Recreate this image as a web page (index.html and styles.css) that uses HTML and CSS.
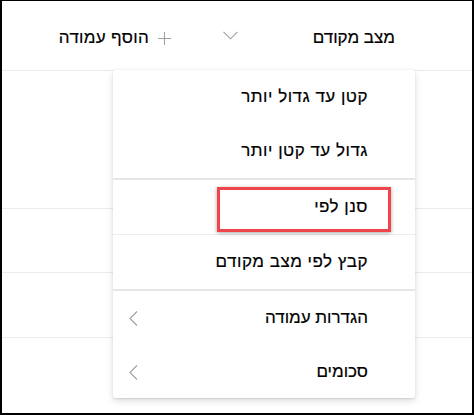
FILE: index.html
```html
<!DOCTYPE html>
<html lang="he" dir="rtl">
<head>
<meta charset="utf-8">
<link rel="stylesheet" href="styles.css">
</head>
<body>
<div class="frame">
  <div class="header">
    <div class="col-head">
      <span class="col-title">מצב מקודם</span>
      <svg class="chev-down" width="15" height="9" viewBox="0 0 15 9"><path d="M0.5 0.8 L7.5 7.8 L14.5 0.8" fill="none" stroke="#a19f9d" stroke-width="1.1"/></svg>
    </div>
    <div class="add-col">
      <svg class="plus" width="13" height="13" viewBox="0 0 13 13"><path d="M6.5 0 V13 M0 6.5 H13" stroke="#a19f9d" stroke-width="1.1"/></svg>
      <span class="add-label">הוסף עמודה</span>
    </div>
  </div>
  <div class="row r1"></div>
  <div class="row r2"></div>
  <div class="row r3"></div>
  <div class="row r4"></div>

  <div class="menu">
    <div class="section">
      <div class="item">קטן עד גדול יותר</div>
      <div class="item">גדול עד קטן יותר</div>
    </div>
    <div class="section">
      <div class="item sep">סנן לפי</div>
      <div class="item">קבץ לפי מצב מקודם</div>
    </div>
    <div class="section">
      <div class="item sub">הגדרות עמודה
        <svg class="chev-left" width="9" height="15" viewBox="0 0 9 15"><path d="M8 0.5 L1 7.5 L8 14.5" fill="none" stroke="#a19f9d" stroke-width="1.1"/></svg>
      </div>
      <div class="item sub">סכומים
        <svg class="chev-left" width="9" height="15" viewBox="0 0 9 15"><path d="M8 0.5 L1 7.5 L8 14.5" fill="none" stroke="#a19f9d" stroke-width="1.1"/></svg>
      </div>
    </div>
  </div>
  <div class="highlight"></div>
</div>
</body>
</html>
```
FILE: styles.css
```css
* { box-sizing: border-box; }
html, body { margin: 0; padding: 0; background: #fff; }
body {
  font-family: "Liberation Sans", Arial, sans-serif;
  color: #000;
}
.frame {
  position: relative;
  width: 474px;
  height: 415px;
  border: 2px solid #000;
  border-top-width: 1px;
  overflow: hidden;
  background: #fff;
}
.header {
  height: 70px;
  border-bottom: 1px solid #edebe9;
  display: flex;
  align-items: center;
  padding-right: 77px;
  padding-top: 4px;
  font-size: 17px;
  -webkit-text-stroke: 0.2px #000;
}
.col-head {
  width: 172px;
  display: flex;
  align-items: center;
  justify-content: space-between;
}
.chev-down { margin-top: -5px; }
.add-col {
  display: flex;
  align-items: center;
  gap: 9px;
  margin-right: 52px;
}
.add-label { letter-spacing: 0.3px; }
.plus { margin-top: 1px; }
.row { border-bottom: 1px solid #edebe9; }
.r1 { height: 138px; }
.r2 { height: 64px; }
.r3 { height: 65px; }
.r4 { border-bottom: none; }
.menu {
  position: absolute;
  left: 111px;
  top: 69px;
  width: 302px;
  height: 328px;
  background: #fff;
  border-radius: 2px;
  box-shadow: 0 3px 7px rgba(0,0,0,0.13), 0 0.5px 2px rgba(0,0,0,0.10);
  display: flex;
  flex-direction: column;
}
.section { border-bottom: 2px solid #e6e6e6; }
.section:last-child { border-bottom: none; }
.item {
  height: 54px;
  display: flex;
  align-items: center;
  padding-right: 47px;
  padding-left: 16px;
  font-size: 17px;
  letter-spacing: 0.5px;
  -webkit-text-stroke: 0.2px #000;
}
.item.sep { height: 55px; border-bottom: 1px solid #ededed; }
.sub { justify-content: space-between; letter-spacing: 0; }
.highlight {
  position: absolute;
  left: 215px;
  top: 186px;
  width: 174px;
  height: 45px;
  border: 3px solid #f0464b;
  box-shadow: 0 1px 4px rgba(0,0,0,0.35);
}
```
